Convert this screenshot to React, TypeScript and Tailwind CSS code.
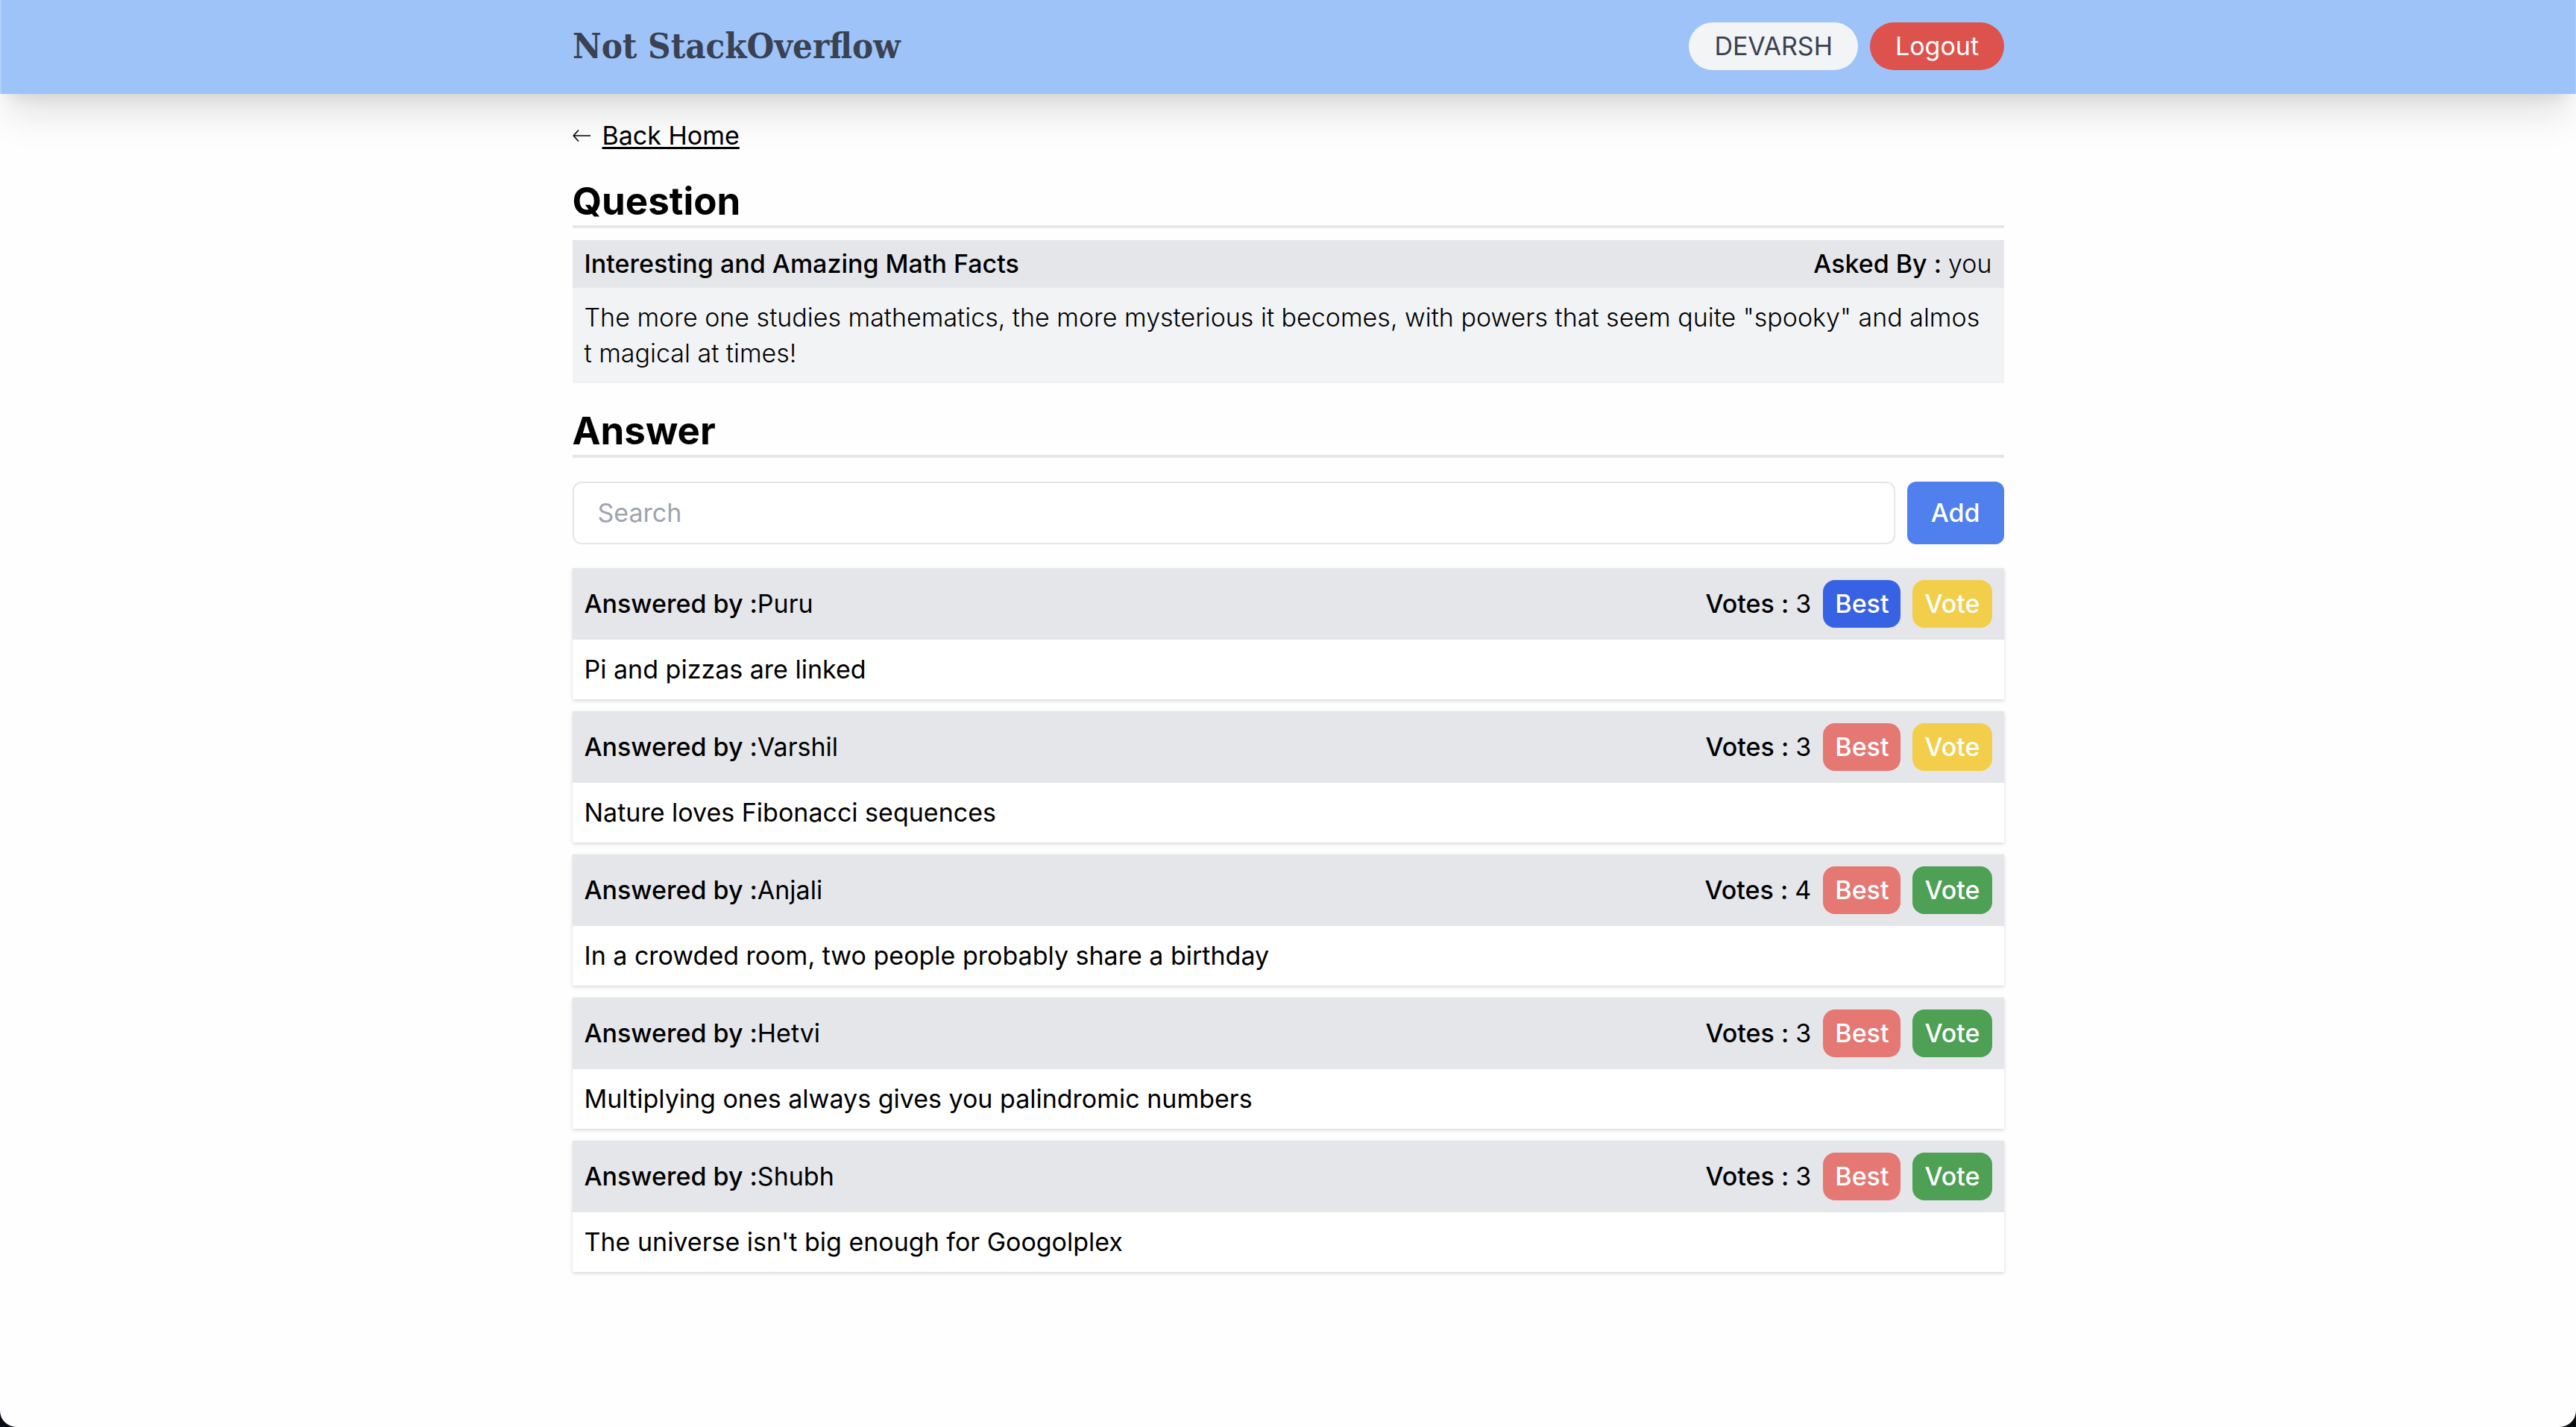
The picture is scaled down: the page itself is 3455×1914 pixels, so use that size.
import React from "react";

type Answer = {
  author: string;
  text: string;
  votes: number;
  best: boolean;
  voted: boolean;
};

const answers: Answer[] = [
  { author: "Puru", text: "Pi and pizzas are linked", votes: 3, best: true, voted: true },
  { author: "Varshil", text: "Nature loves Fibonacci sequences", votes: 3, best: false, voted: true },
  { author: "Anjali", text: "In a crowded room, two people probably share a birthday", votes: 4, best: false, voted: false },
  { author: "Hetvi", text: "Multiplying ones always gives you palindromic numbers", votes: 3, best: false, voted: false },
  { author: "Shubh", text: "The universe isn't big enough for Googolplex", votes: 3, best: false, voted: false },
];

function Header() {
  return (
    <header className="relative border-r border-l-2 border-[#b0cffa] bg-[#9dc3f8] pt-[30px] pb-8 shadow-[0_40px_50px_-10px_rgba(0,0,0,0.1),0_16px_20px_-12px_rgba(0,0,0,0.1)]">
      <div className="mx-auto flex max-w-[1920px] items-center justify-between">
        <span className="font-['DejaVu_Serif_Condensed','DejaVu_Serif',serif] text-[47px] leading-[64px] font-bold text-[#3a4150]">
          Not StackOverflow
        </span>
        <nav className="flex gap-4">
          <button type="button" className="rounded-full bg-[#f2f4f6] px-[34px] py-2 text-[#3a4150]">
            DEVARSH
          </button>
          <button type="button" className="rounded-full bg-[#dd524c] px-[34px] py-2 text-white">
            Logout
          </button>
        </nav>
      </div>
    </header>
  );
}

function SectionTitle({ children }: { children: React.ReactNode }) {
  return (
    <h2 className="mt-8 border-b-4 border-[#e5e6ea] text-[51px] leading-[64px] font-bold">
      {children}
    </h2>
  );
}

function AnswerCard({ answer }: { answer: Answer }) {
  return (
    <li className="shadow-[0_2px_6px_rgba(0,0,0,0.1),0_2px_4px_rgba(0,0,0,0.06)]">
      <div className="flex items-center justify-between bg-[#e5e6ea] p-4">
        <p>
          <span className="font-medium">Answered by :</span>
          {answer.author}
        </p>
        <div className="flex items-center gap-4">
          <p>
            <span className="font-medium">Votes : </span>
            {answer.votes}
          </p>
          <button
            type="button"
            className={`rounded-2xl px-4 py-2 font-medium text-white ${answer.best ? "bg-[#3762e3]" : "bg-[#e57873]"}`}
          >
            Best
          </button>
          <button
            type="button"
            className={`rounded-2xl px-4 py-2 font-medium text-white ${answer.voted ? "bg-[#f2ce4a]" : "bg-[#4ea055]"}`}
          >
            Vote
          </button>
        </div>
      </div>
      <p className="bg-white p-4">{answer.text}</p>
    </li>
  );
}

export default function App() {
  return (
    <div className="bg-[#0b0d14]">
      <div className="min-h-screen rounded-b-[22px] bg-[#fefefe] font-['Inter','Open_Sans',sans-serif] text-[34px] leading-[48px] text-black">
        <Header />
        <main className="relative mx-auto max-w-[1920px] pt-8 pb-16">
          <div className="flex items-center gap-4">
            <svg width="24" height="18" viewBox="0 0 24 18" fill="none" stroke="currentColor" strokeWidth="1.6" aria-hidden="true">
              <path d="M24 9H1.2M8 1.5L1.2 9L8 16.5" strokeLinejoin="round" />
            </svg>
            <a href="#home" className="underline decoration-[3px] underline-offset-[3px] [text-decoration-skip-ink:none]">
              Back Home
            </a>
          </div>

          <SectionTitle>Question</SectionTitle>
          <section className="mt-4 bg-[#f2f3f5]">
            <div className="flex justify-between bg-[#e5e6ea] px-4 py-2">
              <h3 className="font-medium">Interesting and Amazing Math Facts</h3>
              <p className="font-light">
                <span className="font-medium">Asked By : </span>you
              </p>
            </div>
            <p className="py-4 pr-6 pl-4 font-light break-all">
              The more one studies mathematics, the more mysterious it becomes, with powers that seem quite "spooky" and
              almost magical at times!
            </p>
          </section>

          <SectionTitle>Answer</SectionTitle>
          <form className="mt-8 flex gap-4" onSubmit={(e) => e.preventDefault()}>
            <input
              type="text"
              aria-label="Search"
              placeholder="Search"
              className="min-w-0 flex-1 rounded-xl border-2 border-[#e5e6ea] bg-white px-8 py-4 placeholder:text-[#9ea4b0]"
            />
            <button type="submit" className="rounded-xl bg-[#4f80ed] px-8 py-[18px] font-medium text-white">
              Add
            </button>
          </form>

          <ul className="mt-8 flex flex-col gap-4">
            {answers.map((answer) => (
              <AnswerCard key={answer.author} answer={answer} />
            ))}
          </ul>
        </main>
      </div>
    </div>
  );
}
